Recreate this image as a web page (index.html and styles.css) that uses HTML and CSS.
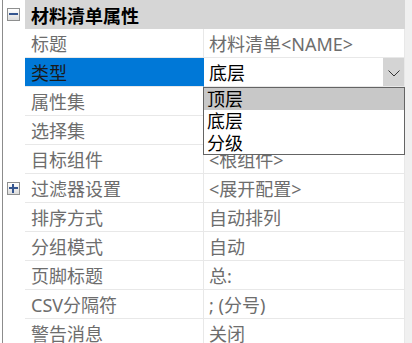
FILE: index.html
```html
<!DOCTYPE html>
<html lang="zh-CN">
<head>
    <meta charset="UTF-8">
    <meta name="viewport" content="width=device-width, initial-scale=1.0">
    <title>材料清单属性</title>
    <link rel="stylesheet" href="styles.css">
</head>
<body>
    <div class="sheet">
        <div class="rail"></div>
        <div class="grid">
            <div class="row head">
                <div class="gut"><span class="tog minus"></span></div>
                <div class="title">材料清单属性</div>
            </div>
            <div class="row">
                <div class="gut"></div>
                <div class="key">标题</div>
                <div class="val">材料清单&lt;NAME&gt;</div>
            </div>
            <div class="row sel">
                <div class="gut"></div>
                <div class="key">类型</div>
                <div class="val combo">
                    <span class="field">底层</span>
                    <span class="btn">
                        <svg width="12" height="7" viewBox="0 0 12 7"><polyline points="0.5,0.5 6,6 11.5,0.5" fill="none" stroke="#333" stroke-width="1"/></svg>
                    </span>
                </div>
            </div>
            <div class="row">
                <div class="gut"></div>
                <div class="key">属性集</div>
                <div class="val"></div>
            </div>
            <div class="row">
                <div class="gut"></div>
                <div class="key">选择集</div>
                <div class="val"></div>
            </div>
            <div class="row">
                <div class="gut"></div>
                <div class="key">目标组件</div>
                <div class="val">&lt;根组件&gt;</div>
            </div>
            <div class="row">
                <div class="gut"><span class="tog plus"></span></div>
                <div class="key">过滤器设置</div>
                <div class="val">&lt;展开配置&gt;</div>
            </div>
            <div class="row">
                <div class="gut"></div>
                <div class="key">排序方式</div>
                <div class="val">自动排列</div>
            </div>
            <div class="row">
                <div class="gut"></div>
                <div class="key">分组模式</div>
                <div class="val">自动</div>
            </div>
            <div class="row">
                <div class="gut"></div>
                <div class="key">页脚标题</div>
                <div class="val">总:</div>
            </div>
            <div class="row">
                <div class="gut"></div>
                <div class="key">CSV分隔符</div>
                <div class="val">; (分号)</div>
            </div>
            <div class="row">
                <div class="gut"></div>
                <div class="key">警告消息</div>
                <div class="val">关闭</div>
            </div>
        </div>
        <div class="strip"></div>

        <!-- open dropdown of the 类型 combo -->
        <ul class="list">
            <li class="hot">顶层</li>
            <li>底层</li>
            <li>分级</li>
        </ul>
    </div>
</body>
</html>
```

FILE: styles.css
```css
body {
    margin: 0;
    background: #fff;
    font-family: "Noto Sans", "Noto Sans CJK SC", sans-serif;
    font-size: 18px;
    color: #6d6d6d;
}
.sheet {
    position: relative;
    display: flex;
    height: 343px;
    overflow: hidden;
}
.rail {
    width: 2px;
    border-right: 1px solid #8c8c8c;
    flex-shrink: 0;
}
.grid {
    width: 402px;
    flex-shrink: 0;
}
.strip {
    flex: 1;
    background: #f0f0f0;
}
.row {
    display: grid;
    grid-template-columns: 22px 179px 201px;
    height: 29px;
}
.gut {
    display: flex;
    align-items: center;
    padding-left: 4px;
}
.key, .val {
    box-sizing: border-box;
    height: 29px;
    display: flex;
    align-items: center;
    border-bottom: 1px solid #e8e8e8;
    border-right: 1px solid #e8e8e8;
    white-space: nowrap;
}
.key {
    padding-left: 6px;
}
.val {
    padding-left: 5px;
}
.head .title {
    grid-column: span 2;
    background: #d6d6d6;
    color: #000;
    font-weight: bold;
    display: flex;
    align-items: center;
    padding-left: 6px;
}
.sel .key {
    background: #0078d7;
    border-right-color: #0078d7;
    color: #1a1a1a;
}
.combo {
    padding-left: 0;
    align-items: stretch;
}
.field {
    flex: 1;
    background: #fff;
    color: #000;
    padding-left: 5px;
    display: flex;
    align-items: center;
}
.btn {
    width: 21px;
    background: #d4d4d4;
    display: flex;
    align-items: center;
    justify-content: center;
    padding-top: 3px;
}
.tog {
    position: relative;
    width: 11px;
    height: 11px;
    border: 1px solid #8e8f8f;
    background: linear-gradient(#ffffff, #dcdcdc);
}
.tog::before {
    content: "";
    position: absolute;
    left: 1px;
    top: 4px;
    width: 9px;
    height: 2px;
    background: #34558f;
}
.plus::after {
    content: "";
    position: absolute;
    left: 4px;
    top: 1px;
    width: 2px;
    height: 9px;
    background: #34558f;
}
.list {
    position: absolute;
    top: 87px;
    left: 203px;
    width: 200px;
    margin: 0;
    padding: 0;
    list-style: none;
    background: #fff;
    border: 1px solid #646464;
    color: #000;
}
.list li {
    height: 22px;
    line-height: 22px;
    padding-left: 3px;
}
.list .hot {
    background: #c8c8c8;
}
```
